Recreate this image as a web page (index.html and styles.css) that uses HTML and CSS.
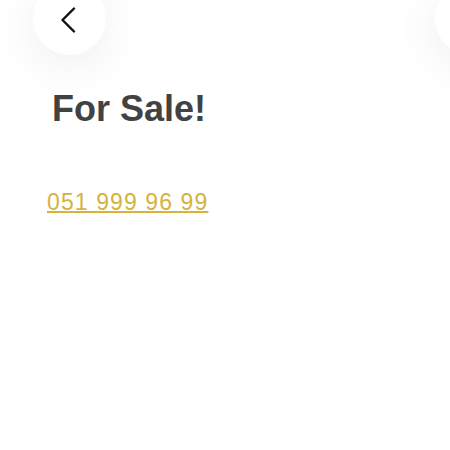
FILE: index.html
```html
<!DOCTYPE html>
<html>
<head>
<meta charset="utf-8">
<link rel="stylesheet" href="styles.css">
</head>
<body>
<div class="page">
  <div class="topbar">
    <div class="circle">
      <svg class="chev" width="16" height="26" viewBox="0 0 16 26"><path d="M14 1.5 L2.5 13 L14 24.5" fill="none" stroke="#111" stroke-width="2.4" stroke-linecap="round" stroke-linejoin="round"/></svg>
    </div>
    <div class="circle"></div>
  </div>
  <h1 class="title">For Sale!</h1>
  <a class="phone" href="#">051 999 96 99</a>
</div>
</body>
</html>
```
FILE: styles.css
```css
html, body {
  margin: 0;
  padding: 0;
  background: #ffffff;
  overflow: hidden;
}
.page {
  width: 450px;
  height: 450px;
  overflow: hidden;
  font-family: "Liberation Sans", Arial, sans-serif;
}
.topbar {
  display: flex;
  gap: 329px;
  padding-left: 33px;
  margin-top: -18px;
}
.circle {
  flex-shrink: 0;
  box-sizing: border-box;
  width: 73px;
  height: 73px;
  border-radius: 50%;
  background: #ffffff;
  box-shadow: 0 10px 48px rgba(0, 0, 0, 0.07);
  display: flex;
  align-items: flex-start;
  justify-content: center;
  padding-top: 25px;
}
.chev {
  margin-left: -4px;
}
.title {
  margin: 33px 0 0 0;
  padding-left: 52px;
  font-size: 36px;
  font-weight: 700;
  line-height: normal;
  color: #424242;
}
.phone {
  display: inline-block;
  margin: 59px 0 0 47px;
  font-size: 23px;
  letter-spacing: 1.1px;
  line-height: normal;
  color: #d4b33f;
  text-decoration: underline;
  text-decoration-thickness: 1.5px;
}
```
